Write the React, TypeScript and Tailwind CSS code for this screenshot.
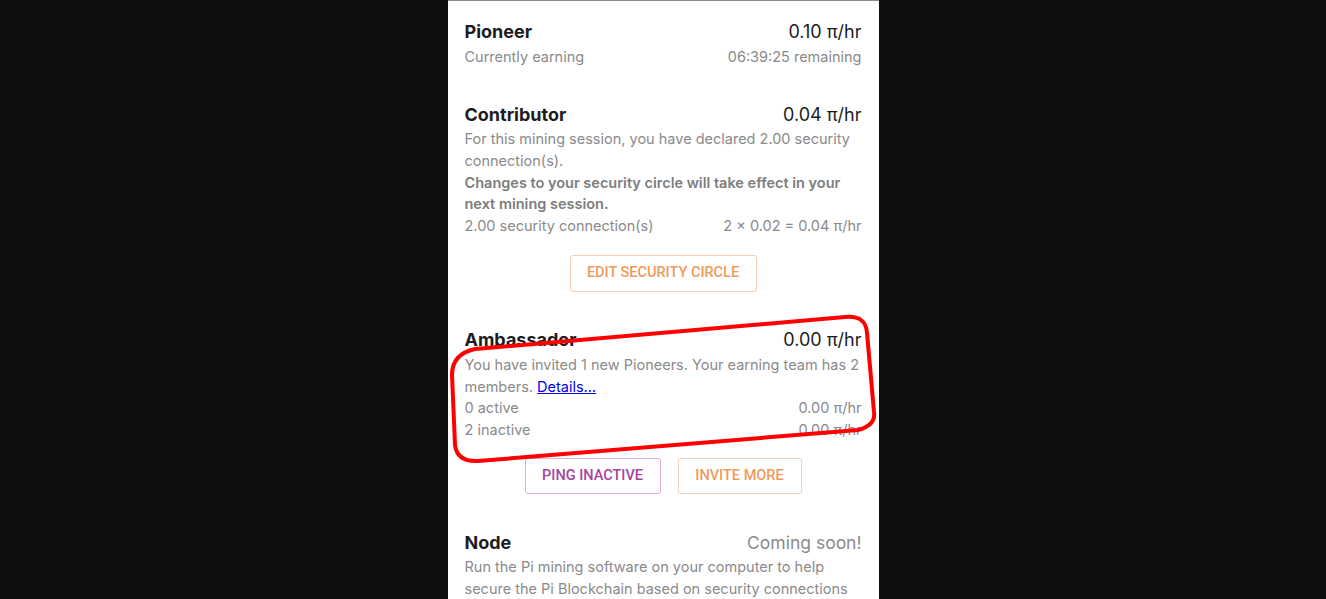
import React from 'react';

const font = { fontFamily: 'Inter, "Noto Sans", sans-serif' };
const roboto = { fontFamily: 'Roboto, "Noto Sans", sans-serif' };

function TitleRow({ title, value, muted }: { title: string; value: string; muted?: boolean }) {
  return (
    <div className="flex h-6 items-center justify-between">
      <span className="text-[18px] font-bold text-[#1c1c1e]">{title}</span>
      <span className={muted ? 'text-[17.5px] text-[#8a8a8a]' : 'text-[18px] text-[#1c1c1e]'}>{value}</span>
    </div>
  );
}

function Row({ left, right }: { left: string; right: string }) {
  return (
    <div className="flex justify-between">
      <span>{left}</span>
      <span>{right}</span>
    </div>
  );
}

export default function App() {
  return (
    <div className="relative min-h-[599px] w-full overflow-hidden bg-[#0f0f0f]" style={font}>
      <div className="mx-auto h-[599px] w-[431px] border-t border-[#8c8c8c] bg-white px-[17px] pt-[18px]">
        {/* Pioneer */}
        <TitleRow title="Pioneer" value="0.10 π/hr" />
        <div className="mt-[3px] flex h-[22px] items-center justify-between text-[14.5px] text-[#8a8a8a]">
          <span>Currently earning</span>
          <span>06:39:25 remaining</span>
        </div>

        {/* Contributor */}
        <div className="mt-[34px]">
          <TitleRow title="Contributor" value="0.04 π/hr" />
          <div className="mt-[2px] text-[14.5px] leading-[21.75px] text-[#8a8a8a]">
            <p>For this mining session, you have declared 2.00 security connection(s).</p>
            <p className="font-semibold text-[#7d7d7d]">
              Changes to your security circle will take effect in your next mining session.
            </p>
            <Row left="2.00 security connection(s)" right="2 × 0.02 = 0.04 π/hr" />
          </div>
          <div className="mt-[18px] flex justify-center">
            <button
              className="h-[37px] w-[187px] rounded-[3px] border border-[#f6cfb2] text-[14.5px] font-medium uppercase text-[#ef9a5c]"
              style={roboto}
            >
              Edit Security Circle
            </button>
          </div>
        </div>

        {/* Ambassador */}
        <div className="mt-[36px]">
          <TitleRow title="Ambassador" value="0.00 π/hr" />
          <div className="mt-[2px] text-[14.5px] leading-[21.75px] text-[#8a8a8a]">
            <p>
              You have invited 1 new Pioneers. Your earning team has 2 members.{' '}
              <a className="text-[#0000ee] underline">Details...</a>
            </p>
            <Row left="0 active" right="0.00 π/hr" />
            <Row left="2 inactive" right="0.00 π/hr" />
          </div>
          <div className="mt-[17px] flex justify-center gap-[17px]" style={roboto}>
            <button className="h-9 w-[136px] rounded-[3px] border border-[#dcaedc] text-[14.5px] font-medium uppercase text-[#a5449f]">
              Ping Inactive
            </button>
            <button className="h-9 w-[124px] rounded-[3px] border border-[#f6cfb2] text-[14.5px] font-medium uppercase text-[#ef9a5c]">
              Invite More
            </button>
          </div>
        </div>

        {/* Node */}
        <div className="mt-[37px]">
          <TitleRow title="Node" value="Coming soon!" muted />
          <p className="mt-[1px] text-[14.5px] leading-[21.75px] text-[#8a8a8a]">
            Run the Pi mining software on your computer to help secure the Pi Blockchain based on security connections
            submitted by Pioneers.
          </p>
        </div>
      </div>

      {/* hand-drawn highlight */}
      <svg className="pointer-events-none absolute left-0 top-0" width="1326" height="599" viewBox="0 0 1326 599">
        <path
          d="M 475 349 L 845 317 Q 866 315 867 333 L 874 412 Q 876 425 858 430 L 478 461 Q 457 462 455 445 L 452 375 Q 452 354 475 349 Z"
          fill="none"
          stroke="#ff0000"
          strokeWidth="4"
          strokeLinejoin="round"
        />
      </svg>
    </div>
  );
}
